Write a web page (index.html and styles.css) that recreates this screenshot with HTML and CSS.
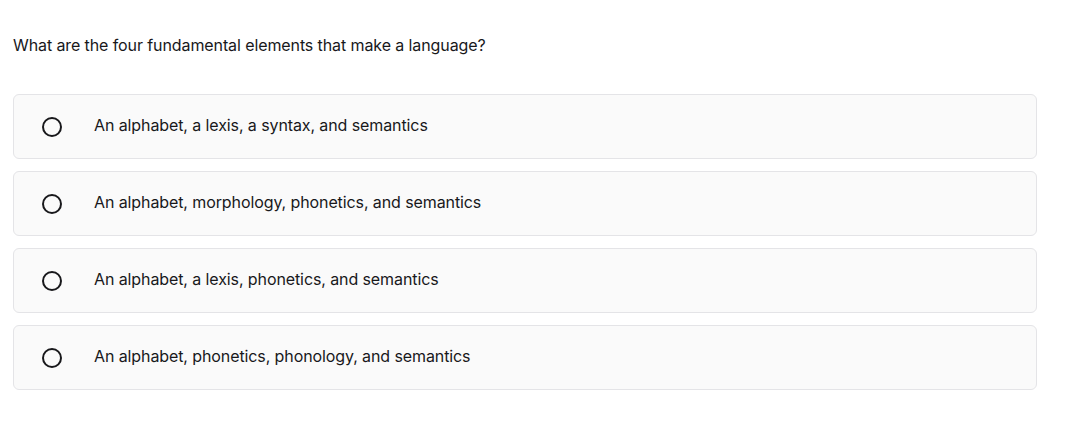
FILE: index.html
```html
<!DOCTYPE html>
<html>
<head>
<meta charset="utf-8">
<link rel="stylesheet" href="styles.css">
</head>
<body>
<div class="quiz">
  <p class="question">What are the four fundamental elements that make a language?</p>
  <div class="options">
    <label class="option"><span class="radio"></span><span class="text">An alphabet, a lexis, a syntax, and semantics</span></label>
    <label class="option"><span class="radio"></span><span class="text">An alphabet, morphology, phonetics, and semantics</span></label>
    <label class="option"><span class="radio"></span><span class="text">An alphabet, a lexis, phonetics, and semantics</span></label>
    <label class="option"><span class="radio"></span><span class="text">An alphabet, phonetics, phonology, and semantics</span></label>
  </div>
</div>
</body>
</html>
```

FILE: styles.css
```css
html, body {
  margin: 0;
  padding: 0;
  background: #ffffff;
}
body {
  font-family: Inter, "Liberation Sans", sans-serif;
  color: #18181b;
}
.quiz {
  width: 1024px;
  padding: 36px 0 0 13px;
}
.question {
  margin: 0 0 40px 0;
  font-size: 16px;
  line-height: 18px;
  letter-spacing: -0.1px;
}
.options {
  display: flex;
  flex-direction: column;
  gap: 12px;
}
.option {
  display: flex;
  align-items: center;
  height: 65px;
  box-sizing: border-box;
  border: 1px solid #e4e4e7;
  border-radius: 6px;
  background: #fafafa;
  padding: 0 0 0 28px;
  gap: 32px;
}
.radio {
  width: 20px;
  height: 20px;
  box-sizing: border-box;
  border: 2px solid #18181b;
  border-radius: 50%;
  flex: none;
}
.text {
  font-size: 16px;
  line-height: 18px;
  letter-spacing: -0.1px;
  margin-bottom: 3px;
}
```
